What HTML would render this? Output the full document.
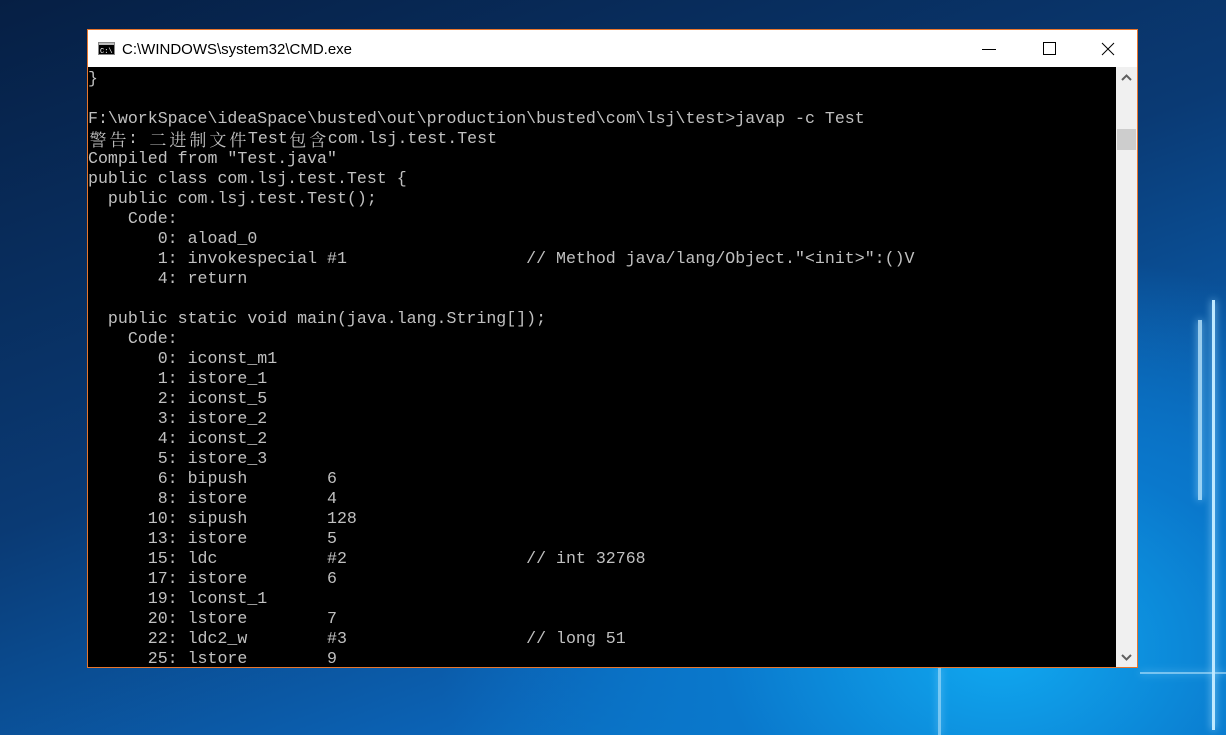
<!DOCTYPE html>
<html><head><meta charset="utf-8"><style>
html,body{margin:0;padding:0;width:1226px;height:735px;overflow:hidden}
body{position:relative;background:
radial-gradient(ellipse 700px 500px at 1000px 650px,#10a8f0 0%,#0a78cc 40%,rgba(8,60,130,0) 80%),
linear-gradient(160deg,#061f44 0%,#0a3a74 45%,#0b62b4 75%,#0a8ee0 100%);}
.pane{position:absolute;background:#bfe9ff;box-shadow:0 0 8px #9fdcff}
#win{position:absolute;left:87px;top:29px;width:1049px;height:637px;border:1px solid #e8762d;background:#fff}
#title{position:absolute;left:0;top:0;width:1049px;height:37px;background:#fff}
#title .t{position:absolute;left:34px;top:11px;font:15px "Liberation Sans",sans-serif;color:#000}
#con{position:absolute;left:0;top:37px;width:1028px;height:600px;background:#000;overflow:hidden}
#con pre{margin:2px 0 0 0;font-family:"Liberation Mono",monospace;font-size:16.6px;line-height:20px;color:#c0c0c0;white-space:pre}
.c{font-family:"Noto Serif CJK SC","Noto Sans CJK SC",serif;font-size:17px;line-height:20px;display:inline-block;width:20px;text-align:center;vertical-align:top}
#sb{position:absolute;left:1028px;top:37px;width:21px;height:600px;background:#f0f0f0}
</style></head><body>
<div class="pane" style="left:1212px;top:300px;width:3px;height:430px"></div>
<div class="pane" style="left:1198px;top:320px;width:4px;height:180px;opacity:.8"></div>
<div class="pane" style="left:1140px;top:672px;width:86px;height:2px;opacity:.6"></div>
<div class="pane" style="left:938px;top:667px;width:3px;height:68px;opacity:.6"></div>
<div id="win">
<div id="title">
<svg style="position:absolute;left:10px;top:12px" width="17" height="13"><rect x="0.5" y="0.5" width="16" height="12" fill="#000" stroke="#888"/><rect x="1" y="1" width="15" height="2" fill="#bbb"/><text x="2" y="11" font-size="7" fill="#fff" font-family="Liberation Mono">C:\</text></svg>
<span class="t">C:\WINDOWS\system32\CMD.exe</span>
<svg style="position:absolute;left:894px;top:12px" width="14" height="14"><line x1="0" y1="7.5" x2="14" y2="7.5" stroke="#000"/></svg>
<svg style="position:absolute;left:955px;top:12px" width="14" height="14"><rect x="0.5" y="0.5" width="12" height="12" fill="none" stroke="#000"/></svg>
<svg style="position:absolute;left:1013px;top:12px" width="14" height="14"><path d="M1 1L13 13M13 1L1 13" stroke="#000"/></svg>
</div>
<div id="con"><pre>}

F:\workSpace\ideaSpace\busted\out\production\busted\com\lsj\test&gt;javap -c Test
<span class="c">警</span><span class="c">告</span>: <span class="c">二</span><span class="c">进</span><span class="c">制</span><span class="c">文</span><span class="c">件</span>Test<span class="c">包</span><span class="c">含</span>com.lsj.test.Test
Compiled from "Test.java"
public class com.lsj.test.Test {
  public com.lsj.test.Test();
    Code:
       0: aload_0
       1: invokespecial #1                  // Method java/lang/Object."&lt;init&gt;":()V
       4: return

  public static void main(java.lang.String[]);
    Code:
       0: iconst_m1
       1: istore_1
       2: iconst_5
       3: istore_2
       4: iconst_2
       5: istore_3
       6: bipush        6
       8: istore        4
      10: sipush        128
      13: istore        5
      15: ldc           #2                  // int 32768
      17: istore        6
      19: lconst_1
      20: lstore        7
      22: ldc2_w        #3                  // long 51
      25: lstore        9</pre></div>
<div id="sb">
<svg style="position:absolute;left:5px;top:7px" width="11" height="8"><path d="M1 6L5.5 1.5L10 6" stroke="#606060" stroke-width="2" fill="none"/></svg>
<div style="position:absolute;left:1px;top:62px;width:19px;height:21px;background:#cdcdcd"></div>
<svg style="position:absolute;left:5px;top:586px" width="11" height="8"><path d="M1 2L5.5 6.5L10 2" stroke="#606060" stroke-width="2" fill="none"/></svg>
</div>
</div>
</body></html>
